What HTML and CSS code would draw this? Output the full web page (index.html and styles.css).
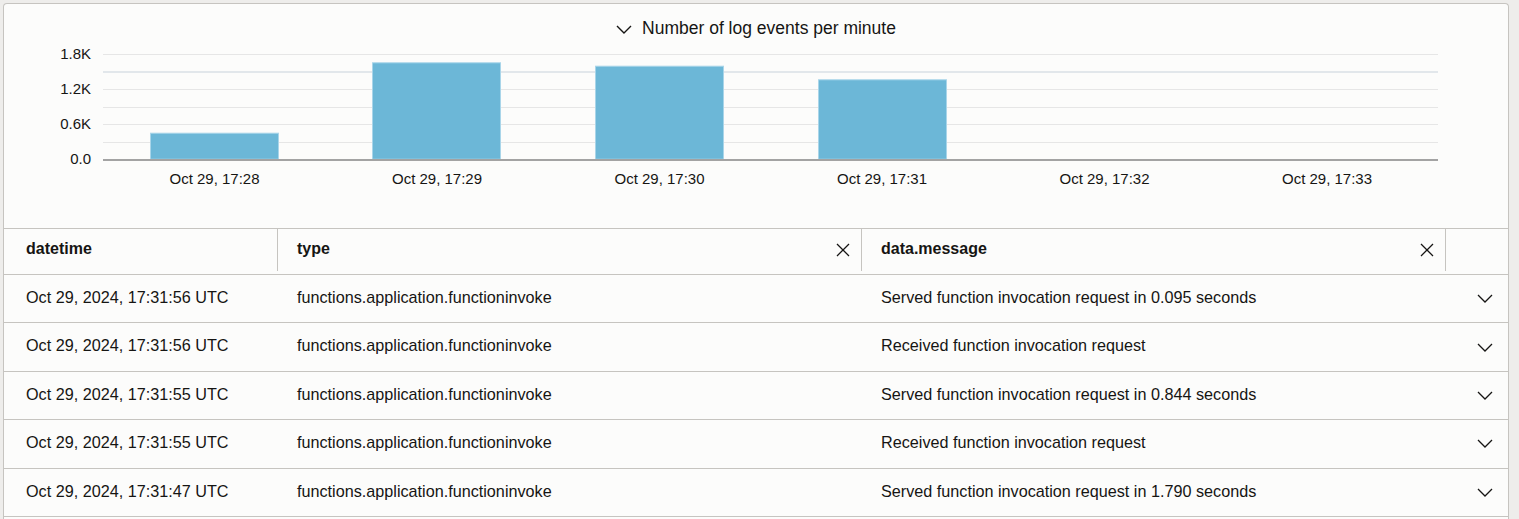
FILE: index.html
```html
<!DOCTYPE html>
<html lang="en">
<head>
<meta charset="utf-8">
<title>Log events</title>
<link rel="stylesheet" href="styles.css">
</head>
<body>
<div class="panel">
  <section class="chart">
    <div class="chart-title">
      <svg class="title-chevron" width="16" height="9" viewBox="0 0 16 9"><path d="M1 1 L8 8 L15 1" fill="none" stroke="#161513" stroke-width="1.4"/></svg>
      <span>Number of log events per minute</span>
    </div>
    <svg class="plot" width="1504" height="189" viewBox="0 0 1504 189">
      <g fill="#e6e6e6">
        <rect x="99" y="15" width="1335" height="1"/>
        <rect x="99" y="32" width="1335" height="2" fill="#e2e7eb"/>
        <rect x="99" y="50" width="1335" height="1"/>
        <rect x="99" y="68" width="1335" height="1"/>
        <rect x="99" y="85" width="1335" height="1"/>
        <rect x="99" y="103" width="1335" height="1"/>
      </g>
      <g fill="#6cb7d7" stroke="#a9d5e9" stroke-width="1">
        <rect x="146.5" y="94.2" width="128" height="26"/>
        <rect x="368.5" y="23.8" width="128" height="96.4"/>
        <rect x="591.5" y="27.2" width="128" height="93"/>
        <rect x="814.5" y="40.8" width="128" height="79.4"/>
      </g>
      <rect x="99" y="120" width="1335" height="2" fill="#a3a3a3"/>
      <g class="ylab" text-anchor="end">
        <text x="87" y="19.5">1.8K</text>
        <text x="87" y="55">1.2K</text>
        <text x="87" y="90.3">0.6K</text>
        <text x="87" y="125">0.0</text>
      </g>
      <g class="xlab" text-anchor="middle">
        <text x="210.5" y="145">Oct 29, 17:28</text>
        <text x="433" y="145">Oct 29, 17:29</text>
        <text x="655.5" y="145">Oct 29, 17:30</text>
        <text x="878" y="145">Oct 29, 17:31</text>
        <text x="1100.5" y="145">Oct 29, 17:32</text>
        <text x="1323" y="145">Oct 29, 17:33</text>
      </g>
    </svg>
  </section>

  <section class="table">
    <div class="thead">
      <div class="th c1">datetime</div>
      <div class="th c2"><span>type</span>
        <svg class="x" width="14" height="14" viewBox="0 0 14 14"><path d="M1 1 L13 13 M13 1 L1 13" stroke="#161513" stroke-width="1.3" fill="none"/></svg>
      </div>
      <div class="th c3"><span>data.message</span>
        <svg class="x" width="14" height="14" viewBox="0 0 14 14"><path d="M1 1 L13 13 M13 1 L1 13" stroke="#161513" stroke-width="1.3" fill="none"/></svg>
      </div>
      <div class="th c4"></div>
    </div>

    <div class="tr">
      <div class="td c1">Oct 29, 2024, 17:31:56 UTC</div>
      <div class="td c2">functions.application.functioninvoke</div>
      <div class="td c3">Served function invocation request in 0.095 seconds</div>
      <div class="td c4"><svg width="16" height="9" viewBox="0 0 16 9"><path d="M1 1 L8 8 L15 1" fill="none" stroke="#161513" stroke-width="1.3"/></svg></div>
    </div>
    <div class="tr">
      <div class="td c1">Oct 29, 2024, 17:31:56 UTC</div>
      <div class="td c2">functions.application.functioninvoke</div>
      <div class="td c3">Received function invocation request</div>
      <div class="td c4"><svg width="16" height="9" viewBox="0 0 16 9"><path d="M1 1 L8 8 L15 1" fill="none" stroke="#161513" stroke-width="1.3"/></svg></div>
    </div>
    <div class="tr">
      <div class="td c1">Oct 29, 2024, 17:31:55 UTC</div>
      <div class="td c2">functions.application.functioninvoke</div>
      <div class="td c3">Served function invocation request in 0.844 seconds</div>
      <div class="td c4"><svg width="16" height="9" viewBox="0 0 16 9"><path d="M1 1 L8 8 L15 1" fill="none" stroke="#161513" stroke-width="1.3"/></svg></div>
    </div>
    <div class="tr">
      <div class="td c1">Oct 29, 2024, 17:31:55 UTC</div>
      <div class="td c2">functions.application.functioninvoke</div>
      <div class="td c3">Received function invocation request</div>
      <div class="td c4"><svg width="16" height="9" viewBox="0 0 16 9"><path d="M1 1 L8 8 L15 1" fill="none" stroke="#161513" stroke-width="1.3"/></svg></div>
    </div>
    <div class="tr">
      <div class="td c1">Oct 29, 2024, 17:31:47 UTC</div>
      <div class="td c2">functions.application.functioninvoke</div>
      <div class="td c3">Served function invocation request in 1.790 seconds</div>
      <div class="td c4"><svg width="16" height="9" viewBox="0 0 16 9"><path d="M1 1 L8 8 L15 1" fill="none" stroke="#161513" stroke-width="1.3"/></svg></div>
    </div>
    <div class="tr-tail"></div>
  </section>
</div>
</body>
</html>
```

FILE: styles.css
```css
html, body {
  margin: 0;
  padding: 0;
}
body {
  background: #eeedeb;
  font-family: "Liberation Sans", Arial, sans-serif;
  color: #161513;
  height: 519px;
  overflow: hidden;
}
.panel {
  margin: 3px 0 0 3px;
  width: 1506px;
  box-sizing: border-box;
  border: 1px solid #c6c4c0;
  border-bottom: none;
  border-radius: 4px 4px 0 0;
  background: #fcfcfb;
}
.chart {
  display: flex;
  flex-direction: column;
}
.chart-title {
  display: flex;
  justify-content: center;
  align-items: center;
  gap: 10px;
  padding-top: 12px;
  height: 23px;
  line-height: 24px;
  font-size: 17.5px;
}
.title-chevron {
  display: block;
  margin-top: 4px;
}
.plot {
  display: block;
}
.plot text {
  font-family: "Liberation Sans", Arial, sans-serif;
  font-size: 15px;
  fill: #161513;
}
.table {
  border-top: 1px solid #c6c4c0;
  font-size: 16px;
  line-height: 20px;
}
.thead, .tr {
  display: grid;
  grid-template-columns: 274px 584px 584px 1fr;
}
.thead {
  height: 46px;
  box-sizing: border-box;
  border-bottom: 1px solid #c6c4c0;
  align-items: start;
}
.th {
  height: 42px;
  box-sizing: border-box;
  padding-top: 10px;
  font-weight: bold;
  border-right: 1px solid #c6c4c0;
  display: flex;
  justify-content: space-between;
  align-items: flex-start;
}
.th .x {
  display: block;
  margin-top: 4px;
}
.th.c4 {
  border-right: none;
}
.c1 { padding-left: 22px; }
.c2, .c3 { padding-left: 19px; padding-right: 11px; }
.tr {
  height: 48.4px;
  box-sizing: border-box;
  border-bottom: 1px solid #c6c4c0;
}
.tr-tail {
  height: 10px;
}
.td {
  padding-top: 12px;
  white-space: nowrap;
  font-size: 16.2px;
}
.td.c4 {
  padding: 0 15px 0 0;
  display: flex;
  justify-content: flex-end;
  align-items: center;
}
.td.c4 svg {
  display: block;
}
```
